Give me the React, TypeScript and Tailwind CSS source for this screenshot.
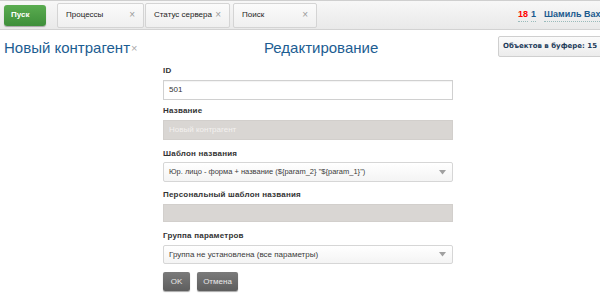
import React from 'react';

const font = { fontFamily: '"Liberation Sans", Arial, sans-serif' };

const Tab: React.FC<{ title: string; w: string }> = ({ title, w }) => (
  <div className={`${w} h-[25px] flex items-center justify-between pl-2 pr-2 border border-[#d4d4d4] rounded-[2px] bg-gradient-to-b from-[#fbfbfb] to-[#efefef] text-[8px] text-[#222]`}>
    <span>{title}</span>
    <span className="text-[10px] text-[#9a9a9a] leading-none">×</span>
  </div>
);

const Label: React.FC<{ children: React.ReactNode }> = ({ children }) => (
  <div className="h-[8px] text-[8px] font-bold text-[#333] leading-[8px] tracking-[0.2px]">{children}</div>
);

const Arrow = () => (
  <svg width="7" height="5" viewBox="0 0 7 5" className="shrink-0">
    <path d="M0 0 L7 0 L3.5 4.5 Z" fill="#a0a0a0" />
  </svg>
);

export default function App() {
  return (
    <div style={font} className="w-[600px] h-[297px] bg-white overflow-hidden">
      {/* Top bar */}
      <div className="h-[30px] flex items-center border-t border-t-[#cfcfcf] border-b border-b-[#d2d2d2] bg-gradient-to-b from-[#f7f7f7] to-[#e9e9e9]">
        <div className="ml-[4px] w-[42px] h-[21px] flex items-center pl-[7px] rounded-[3px] bg-gradient-to-b from-[#5aac50] to-[#3e8f3a] text-white text-[8px] font-bold shadow-[0_1px_1px_rgba(0,0,0,0.3)]">
          Пуск
        </div>
        <div className="ml-[11px] flex items-center">
          <Tab title="Процессы" w="w-[87px]" />
          <div className="ml-[1px]"><Tab title="Статус сервера" w="w-[85px]" /></div>
          <div className="ml-[3px]"><Tab title="Поиск" w="w-[84px]" /></div>
        </div>
        <div className="ml-auto flex items-center text-[9px] font-bold whitespace-nowrap translate-x-[2px]">
          <span className="text-[#ff0000] border-b border-dotted border-[#9bb]">18</span>
          <span className="ml-[3px] text-[#1b5a8e] border-b border-dotted border-[#9bb]">1</span>
          <span className="ml-[8px] text-[#1b5a8e] border-b border-dotted border-[#9bb] w-[58px] overflow-hidden">Шамиль Вахитов</span>
        </div>
      </div>

      {/* Header */}
      <div className="h-[36px] flex items-center relative">
        <div className="ml-[4px] flex items-center text-[15px] text-[#1c5d92] whitespace-nowrap">
          <span>Новый контрагент</span>
          <span className="ml-[1px] text-[11px] text-[#aaa]">×</span>
        </div>
        <div className="absolute left-[264px] text-[15px] text-[#1c5d92]">Редактирование</div>
        <div
          style={{ fontFamily: '"DejaVu Sans", Verdana, sans-serif' }}
          className="ml-auto mr-[-12px] self-start mt-[6px] h-[21px] w-[114px] flex items-center pl-[4px] border border-[#cfcfcf] rounded-[2px] bg-gradient-to-b from-[#fbfbfb] to-[#ececec] text-[7px] font-bold text-[#1d3b5a] whitespace-nowrap"
        >
          Объектов в буфере: 15
        </div>
      </div>

      {/* Form */}
      <div className="ml-[163px] w-[290px] flex flex-col">
        <div className="mt-[1px]"><Label>ID</Label></div>
        <div className="mt-[5px] h-[20px] flex items-center px-[5px] border border-[#d0d0d0] bg-white text-[8px] text-[#333] shadow-[inset_0_1px_1px_rgba(0,0,0,0.05)]">
          501
        </div>

        <div className="mt-[7px]"><Label>Название</Label></div>
        <div className="mt-[5px] h-[20px] flex items-center px-[5px] border border-[#d2cfcc] bg-[#d9d6d3] text-[8px] text-[#f3f1ef]">
          Новый контрагент
        </div>

        <div className="mt-[10px]"><Label>Шаблон названия</Label></div>
        <div className="mt-[4px] h-[20px] flex items-center justify-between pl-[5px] pr-[6px] border border-[#d6d6d6] rounded-[2px] bg-gradient-to-b from-[#ffffff] to-[#f4f4f4] text-[7.5px] text-[#3a3a3a]">
          <span>Юр. лицо - форма + название (${'{'}param_2{'}'} "${'{'}param_1{'}'}")</span>
          <Arrow />
        </div>

        <div className="mt-[9px]"><Label>Персональный шаблон названия</Label></div>
        <div className="mt-[5px] h-[18px] border border-[#d2cfcc] bg-[#d9d6d3]" />

        <div className="mt-[10px]"><Label>Группа параметров</Label></div>
        <div className="mt-[5px] h-[19px] flex items-center justify-between pl-[5px] pr-[6px] border border-[#d6d6d6] rounded-[2px] bg-gradient-to-b from-[#ffffff] to-[#f4f4f4] text-[8px] text-[#3a3a3a]">
          <span>Группа не установлена (все параметры)</span>
          <Arrow />
        </div>

        <div className="mt-[8px] flex items-center gap-[7px]">
          <div className="w-[27px] h-[19px] flex items-center justify-center rounded-[2px] bg-gradient-to-b from-[#7a7a7a] to-[#5e5e5e] text-[8px] text-[#e8e8e8] shadow-[0_1px_1px_rgba(0,0,0,0.35)]">
            OK
          </div>
          <div className="w-[41px] h-[19px] flex items-center justify-center rounded-[2px] bg-gradient-to-b from-[#7a7a7a] to-[#5e5e5e] text-[8px] text-[#e8e8e8] shadow-[0_1px_1px_rgba(0,0,0,0.35)]">
            Отмена
          </div>
        </div>
      </div>
    </div>
  );
}
